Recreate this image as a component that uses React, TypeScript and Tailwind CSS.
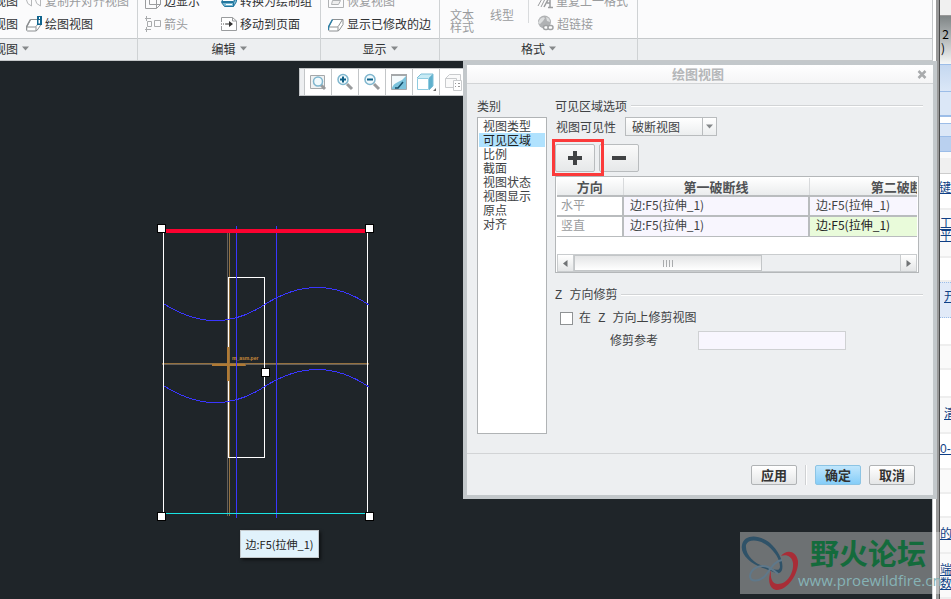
import React, { useState } from 'react';

const CATEGORIES = ['视图类型', '可见区域', '比例', '截面', '视图状态', '视图显示', '原点', '对齐'];

const BREAK_LINES = [
  { direction: '水平', first: '边:F5(拉伸_1)', second: '边:F5(拉伸_1)', active: false },
  { direction: '竖直', first: '边:F5(拉伸_1)', second: '边:F5(拉伸_1)', active: true },
];

const Caret: React.FC = () => (
  <svg width="7" height="5" viewBox="0 0 7 5" aria-hidden="true">
    <path d="M0 0.5h7L3.5 4.5z" fill="#85888a" />
  </svg>
);

const CubeIcon: React.FC = () => (
  <svg width="16" height="16" viewBox="0 0 16 16" fill="none" stroke="#9a9c9e" aria-hidden="true">
    <path d="M0.5 4.5h11v11H0.5zM4.5 0.5h11v11h-11zM0.5 4.5l4-4M11.5 15.5l4-4" />
  </svg>
);

const RestoreIcon: React.FC = () => (
  <svg width="16" height="16" viewBox="0 0 16 16" fill="none" stroke="#b0b2b4" aria-hidden="true">
    <path d="M0.500 2.500h15v12H0.500z" />
    <path d="M4.500 7.500h8l-2 4h-7z" fill="#eee" />
  </svg>
);

const SheetIcon: React.FC<{ edge: string; badge?: boolean }> = ({ edge, badge }) => (
  <svg width="16" height="16" viewBox="0 0 16 16" fill="none" aria-hidden="true">
    <path d="M4.500 3.500h10.500v5l-3 4.500q-1 2-2.500 2H1.500q-1 0-1-1.500V11z" fill="#fff" stroke="#8d9092" />
    <path d="M0.500 11h8.500q1 0 1.500-1l4-6.500M10 11v4" stroke="#8d9092" />
    <path d="M0.500 14V11l4-7.500" stroke={edge} strokeWidth="1.500" />
    {badge && (
      <>
        <path d="M11 0h5v9h-5z" fill="#0f648e" />
        <path d="M13 1h1v2h-1zM12.500 4h1.500v3.500h-1.500z" fill="#fff" />
      </>
    )}
  </svg>
);

const ConvertIcon: React.FC = () => (
  <svg width="16" height="16" viewBox="0 0 16 16" fill="none" stroke="#23769e" aria-hidden="true">
    <path d="M4.500 3.500h11l-3 5H0.500z" fill="#fff" />
    <path d="M0.500 9.500h12v4h-9zM12.500 9.500l3-5v4l-3 5" fill="#7ab9d3" />
    <path d="M5 11.500h6" stroke="#fff" />
  </svg>
);

const CopyAlignIcon: React.FC = () => (
  <svg width="16" height="16" viewBox="0 0 16 16" fill="none" stroke="#b5b7b9" aria-hidden="true">
    <path d="M0.500 7q0 4 5 6V7q-2 0-2-4M9.500 7q0 4 5 6V7q-2 0-2-4" />
  </svg>
);

const ArrowsIcon: React.FC = () => (
  <svg width="16" height="16" viewBox="0 0 16 16" fill="none" stroke="#a9abad" aria-hidden="true">
    <path d="M0 2.500h6M1.500 0v5M0 13.500h6M1.500 11v5M2.500 5.500h4v5h-4zM9.500 4.500h6v6h-6z" />
  </svg>
);

const MovePageIcon: React.FC = () => (
  <svg width="16" height="16" viewBox="0 0 16 16" fill="none" aria-hidden="true">
    <path d="M0.500 6V1.500h11l4 3.500v9.500H0.500V10" fill="#fff" stroke="#9a9c9e" />
    <path d="M11.500 1.500V5h4" stroke="#9a9c9e" />
    <path d="M0 8h5" stroke="#555" strokeWidth="1" strokeDasharray="1 1" />
    <path d="M5 7.500h3V5l4 3-4 3V8.500H5z" fill="#333" />
  </svg>
);

const FormatIcon: React.FC = () => (
  <svg width="16" height="16" viewBox="0 0 16 16" fill="none" stroke="#9a9c9e" aria-hidden="true">
    <path d="M1 13l5-9M4 14l6-12" />
    <path d="M7 14l6-11v11M10 10h3M11 14.500h5" strokeWidth="1.500" />
  </svg>
);

const LinkIcon: React.FC = () => (
  <svg width="17" height="17" viewBox="0 0 17 17" fill="none" aria-hidden="true">
    <circle cx="7.500" cy="7" r="6.500" fill="#b0b2b4" />
    <path d="M3 4q3-3 5-1l-2 3-3 3-2-1zM9 2q4 1 4 5l-3-1z" fill="#dcdedf" />
    <rect x="6.500" y="10.500" width="5" height="4" rx="2" fill="#fff" stroke="#a0a2a4" strokeWidth="1.500" />
    <rect x="11" y="10.500" width="5" height="4" rx="2" fill="#fff" stroke="#a0a2a4" strokeWidth="1.500" />
  </svg>
);

interface RibbonButtonProps {
  icon?: React.ReactNode;
  label: string;
  disabled?: boolean;
}

const RibbonButton: React.FC<RibbonButtonProps> = ({ icon, label, disabled }) => (
  <button
    disabled={disabled}
    className="flex h-[23px] items-center gap-[3px] whitespace-nowrap text-[#303234] disabled:text-[#9a9c9e]"
  >
    {icon}
    {label}
  </button>
);

interface RibbonGroupProps {
  title: string;
  className: string;
  children?: React.ReactNode;
}

const RibbonGroup: React.FC<RibbonGroupProps> = ({ title, className, children }) => (
  <section className={`flex flex-col border-r border-[#cfd2d4] ${className}`}>
    <div className="flex h-[38px] items-end overflow-hidden pb-[3px]">{children}</div>
    <button className="flex h-[22px] items-center justify-center gap-1 border-t border-[#c5c8ca] bg-[#edeff1] pb-0.5 text-[#303234]">
      {title}
      <Caret />
    </button>
  </section>
);

const Ribbon: React.FC = () => (
  <header className="flex h-[61px] shrink-0 overflow-hidden border-b border-[#c5c8ca] bg-[#fbfbfc]">
    <section className="flex w-[138px] shrink-0 flex-col border-r border-[#cfd2d4]">
      <div className="flex h-[38px] items-end gap-2 overflow-hidden pb-[3px]">
        <div className="flex w-[18px] shrink-0 flex-col items-end">
          <RibbonButton label="视图" />
          <RibbonButton label="视图" />
        </div>
        <div className="flex shrink-0 flex-col">
          <RibbonButton icon={<CopyAlignIcon />} label="复制并对齐视图" disabled />
          <RibbonButton icon={<SheetIcon edge="#8d9092" badge />} label="绘图视图" />
        </div>
      </div>
      <div className="flex h-[22px] items-center border-t border-[#c5c8ca] bg-[#edeff1] pb-0.5">
        <button className="flex w-[29px] items-center justify-end gap-1 whitespace-nowrap text-[#303234]">
          视图
          <span className="shrink-0">
            <Caret />
          </span>
        </button>
      </div>
    </section>

    <RibbonGroup title="编辑" className="w-[183px] shrink-0">
      <div className="flex w-[83px] flex-col pl-[7px]">
        <RibbonButton icon={<CubeIcon />} label="边显示" />
        <RibbonButton icon={<ArrowsIcon />} label="箭头" disabled />
      </div>
      <div className="flex flex-col">
        <RibbonButton icon={<ConvertIcon />} label="转换为绘制组" />
        <RibbonButton icon={<MovePageIcon />} label="移动到页面" />
      </div>
    </RibbonGroup>

    <RibbonGroup title="显示" className="w-[119px] shrink-0">
      <div className="flex flex-col pl-[7px]">
        <RibbonButton icon={<RestoreIcon />} label="恢复视图" disabled />
        <RibbonButton icon={<SheetIcon edge="#2d7fa6" />} label="显示已修改的边" />
      </div>
    </RibbonGroup>

    <RibbonGroup title="格式" className="w-[198px] shrink-0">
      <button disabled className="mb-0.5 ml-2.5 w-6 shrink-0 text-xs leading-3 text-[#9a9c9e]">
        文本样式
      </button>
      <button disabled className="mb-3 ml-4 w-6 shrink-0 whitespace-nowrap text-[#9a9c9e]">
        线型
      </button>
      <div className="mb-3 ml-3.5 mr-2 h-6 w-px bg-[#d9dbdd]" />
      <div className="flex flex-col">
        <RibbonButton icon={<FormatIcon />} label="重复上一格式" disabled />
        <RibbonButton icon={<LinkIcon />} label="超链接" disabled />
      </div>
    </RibbonGroup>

    <div className="flex flex-1 flex-col">
      <div className="h-[38px]" />
      <div className="h-[22px] border-t border-[#c5c8ca] bg-[#edeff1]" />
    </div>
  </header>
);

const Magnifier: React.FC<{ sign?: 'plus' | 'minus' }> = ({ sign }) => (
  <svg width="18" height="18" viewBox="0 0 18 18" fill="none" aria-hidden="true">
    {!sign && <path d="M1.500 2.500h14v13h-14z" fill="#f0f2f3" stroke="#a5a8aa" />}
    <path d="M11 11l5 5" stroke="#999b9d" strokeWidth="3" />
    <circle cx={sign ? 7 : 9} cy={sign ? 6.5 : 8.5} r={sign ? 5 : 4.5} fill="#f1fafd" stroke="#7fb6ce" strokeWidth="1.500" />
    {sign && <path d="M4 6.500h6" stroke="#0d5f86" strokeWidth="2" />}
    {sign === 'plus' && <path d="M7 3.500v6" stroke="#0d5f86" strokeWidth="2" />}
  </svg>
);

const RepaintIcon: React.FC = () => (
  <svg width="18" height="18" viewBox="0 0 18 18" fill="none" aria-hidden="true">
    <path d="M1.500 1.500h15v15h-15z" fill="#7cc3dc" stroke="#a5a8aa" />
    <path d="M2 3h14Q13 7 8 9 3 11 2 15z" fill="#f4fafc" />
    <path d="M1 2h16" stroke="#a5a8aa" strokeWidth="2" />
    <path d="M5 15h3l5-6" stroke="#17506b" strokeWidth="1.500" />
  </svg>
);

const ShadedIcon: React.FC = () => (
  <svg width="20" height="18" viewBox="0 0 20 18" fill="none" aria-hidden="true">
    <path d="M1 5l4-4h12l-4 4z" fill="#c8ebf5" />
    <path d="M13 5l4-4v12l-4 4z" fill="#5fb0cd" />
    <path d="M1.500 5.500h11v11h-11z" fill="#fff" stroke="#8fcbe0" />
    <path d="M1 5l4-4h12l-4 4M17 1v12l-4 4" stroke="#7dbfd7" />
    <path d="M20 15v3h-3z" fill="#666" />
  </svg>
);

const SavedViewIcon: React.FC = () => (
  <svg width="18" height="18" viewBox="0 0 18 18" fill="none" stroke="#c9cbcd" aria-hidden="true">
    <path d="M1.500 5.500h11v9h-11zM1.500 5.500l4-4h11v6" fill="#fafafa" />
    <path d="M9.500 7.500h8v10h-8z" fill="#fff" />
    <path d="M11 10.500h1M14 10.500h2M11 13.500h1M14 13.500h2" stroke="#999" />
  </svg>
);

const VIEW_TOOLS = [
  { label: '重新调整', icon: <Magnifier /> },
  { label: '放大', icon: <Magnifier sign="plus" /> },
  { label: '缩小', icon: <Magnifier sign="minus" /> },
  { label: '重画', icon: <RepaintIcon /> },
  { label: '显示样式', icon: <ShadedIcon /> },
  { label: '已命名视图', icon: <SavedViewIcon /> },
];

// Broken view drawing, in the coordinates of the sheet
const Drawing: React.FC = () => (
  <svg className="absolute left-[150px] top-[159px]" width="230" height="310" viewBox="150 220 230 310" fill="none" shapeRendering="crispEdges">
    <path d="M227.500 233V516M162 364.500H369" stroke="#66605a" />
    <path d="M229.500 233V516M162 363.500H369" stroke="#94713f" />
    <path d="M212 364.500h34M228 347v34" stroke="#b07a35" strokeWidth="2" />
    <path d="M163.500 233V513M367.500 233V513" stroke="#fff" />
    <path d="M228.500 347V277.500H264.500V457.500H228.500V381" stroke="#fff" />
    <path d="M236.500 226V518M276.500 226V518" stroke="#3a36ff" />
    <path d="M164 304C198 325 230 327 264 305S334 281 369 305" stroke="#3a36ff" />
    <path d="M164 386C198 407 230 409 264 387S334 363 369 387" stroke="#3a36ff" />
    <path d="M164 513.500H367" stroke="#19e3e3" />
    <path d="M164 231H368" stroke="#fb0230" strokeWidth="4" />
    <path d="M245 363v3" stroke="#8a6b42" />
    <text x="232" y="360" fill="#c88a3a" fontSize="5" fontWeight="bold" fontFamily="Liberation Sans, sans-serif">
      m_asm.per
    </text>
    <g fill="#fff" stroke="#000">
      <rect x="157.500" y="224.500" width="8" height="8" />
      <rect x="365.500" y="224.500" width="8" height="8" />
      <rect x="261.500" y="368.500" width="8" height="8" />
      <rect x="157.500" y="512.500" width="8" height="8" />
      <rect x="365.500" y="512.500" width="8" height="8" />
    </g>
  </svg>
);

const Canvas: React.FC = () => (
  <main className="relative flex-1 overflow-hidden bg-[#1f2529]">
    <div className="ml-[299px] mt-[7px] flex h-7 w-[170px] border border-[#c3c6c8] bg-[#edeff1] pl-1">
      {VIEW_TOOLS.map((tool) => (
        <button
          key={tool.label}
          aria-label={tool.label}
          className="flex w-[27px] shrink-0 items-center justify-center border-l border-[#c3c6c8] bg-white"
        >
          {tool.icon}
        </button>
      ))}
    </div>
    <Drawing />
    <div
      role="tooltip"
      className="absolute left-[240px] top-[469px] flex h-7 w-[79px] items-center justify-center whitespace-nowrap border border-[#c3c8cb] bg-[#e1f2fb] text-[11px] text-[#222] shadow-[2px_2px_3px_#0008]"
    >
      边:F5(拉伸_1)
    </div>
  </main>
);

const FieldsetTitle: React.FC<{ children: React.ReactNode }> = ({ children }) => (
  <legend className="flex h-4 w-full items-center gap-1 whitespace-nowrap">
    {children}
    <span className="h-0.5 flex-1 border-t border-[#d2d4d6] bg-white" />
  </legend>
);

const TOOL_BUTTON =
  'flex h-7 w-10 items-center justify-center rounded-xs border border-[#b9bcbe] bg-linear-to-b from-[#fafafa] to-[#e6e8e9]';
const FOOTER_BUTTON = 'h-5 w-[46px] rounded-xs border text-[13px] leading-4 font-bold text-[#333]';
const PLAIN = 'border-[#b0b3b5] bg-linear-to-b from-white to-[#e4e6e7]';

const BreakTable: React.FC = () => (
  <div className="h-[97px] overflow-hidden border border-[#b4b7b9] bg-white p-px">
    <div className="h-[76px] overflow-hidden">
      <table className="w-[440px] table-fixed border-collapse">
        <thead>
          <tr className="h-[18px] bg-linear-to-b from-white to-[#e9ebec] text-[13px] text-[#505254]">
            <th className="w-[66px] border-r border-[#d8dadc] p-0 leading-4">方向</th>
            <th className="w-[186px] border-r border-[#d8dadc] p-0 leading-4">第一破断线</th>
            <th className="p-0 leading-4">第二破断线</th>
          </tr>
        </thead>
        <tbody>
          {BREAK_LINES.map((row) => (
            <tr key={row.direction} className="h-5 border-t-2 border-b border-[#b9bcbe]">
              <td className="border-r-2 border-[#b9bcbe] pb-0.5 pl-1 pt-0 leading-4 text-[#9a9c9e]">{row.direction}</td>
              <td className="border-r-2 border-[#b9bcbe] bg-[#f8f6fe] pb-0.5 pl-1.5 pt-0 leading-4">{row.first}</td>
              <td className={`pb-0.5 pl-1.5 pt-0 leading-4 ${row.active ? 'bg-[#e9fbda] text-[#222]' : 'bg-[#f8f6fe]'}`}>
                {row.second}
              </td>
            </tr>
          ))}
        </tbody>
      </table>
    </div>
    <div className="flex h-[18px] border border-[#c9ccce] bg-[#edeff1]">
      <button aria-label="向左滚动" className="flex w-4 items-center justify-center border-r border-[#c9ccce] bg-linear-to-b from-white to-[#e4e6e7]">
        <svg width="5" height="7" viewBox="0 0 5 7"><path d="M4.500 0v7L0 3.500z" fill="#707375" /></svg>
      </button>
      <div className="flex-1">
        <div className="flex h-full w-[188px] items-center justify-center gap-0.5 border border-[#c3c6c8] bg-linear-to-b from-[#e4e5e6] to-white">
          <span className="h-[7px] w-px bg-[#a9abad]" />
          <span className="h-[7px] w-px bg-[#a9abad]" />
          <span className="h-[7px] w-px bg-[#a9abad]" />
          <span className="h-[7px] w-px bg-[#a9abad]" />
        </div>
      </div>
      <button aria-label="向右滚动" className="flex w-4 items-center justify-center border-l border-[#c9ccce] bg-linear-to-b from-white to-[#e4e6e7]">
        <svg width="5" height="7" viewBox="0 0 5 7"><path d="M0.500 0v7L5 3.500z" fill="#707375" /></svg>
      </button>
    </div>
  </div>
);

const DrawingViewDialog: React.FC = () => {
  const [category, setCategory] = useState('可见区域');
  const [clipZ, setClipZ] = useState(false);

  return (
    <div
      role="dialog"
      aria-label="绘图视图"
      className="absolute right-[14px] top-[61px] flex h-[438px] w-[474px] flex-col border-4 border-[#c3c8cb] bg-[#edeff1] text-[#404244]"
    >
      <div className="flex h-[19px] shrink-0 items-center border-b border-[#d2d4d6] bg-linear-to-b from-white to-[#f5f5f6] pl-3 pr-1.5 text-[13px] font-bold text-[#b5b7b9]">
        <h1 className="flex-1 text-center leading-4">绘图视图</h1>
        <button aria-label="关闭">
          <svg width="10" height="9" viewBox="0 0 10 9"><path d="M1.500 1l7 7M8.500 1l-7 7" stroke="#a9abad" strokeWidth="2.500" /></svg>
        </button>
      </div>

      <div className="flex min-h-0 flex-1 gap-2 px-2.5 pt-3.5">
        <div className="flex w-[70px] shrink-0 flex-col gap-[3px]">
          <h2 className="h-4 leading-4">类别</h2>
          <ul className="h-[317px] border border-[#b0b3b5] bg-white p-px">
            {CATEGORIES.map((name) => (
              <li key={name}>
                <button
                  onClick={() => setCategory(name)}
                  className={`block h-3.5 w-full pl-1 text-left leading-3.5 ${name === category ? 'bg-[#b0e2fe] text-[#222]' : ''}`}
                >
                  {name}
                </button>
              </li>
            ))}
          </ul>
        </div>

        <div className="min-w-0 flex-1">
          <fieldset className="min-w-0">
            <FieldsetTitle>可见区域选项</FieldsetTitle>
            <div className="mt-[3px] flex h-[19px] items-center gap-[9px] pl-px">
              <label htmlFor="visibility">视图可见性</label>
              <div className="relative h-[19px] w-[92px]">
                <select id="visibility" className="h-full w-full appearance-none border border-[#b9bcbe] bg-linear-to-b from-white to-[#eceeef] pl-1.5 leading-4">
                  <option>破断视图</option>
                  <option>全视图</option>
                  <option>半视图</option>
                </select>
                <span className="pointer-events-none absolute right-px top-px flex h-[17px] w-3.5 items-center justify-center border-l border-[#b9bcbe]">
                  <Caret />
                </span>
              </div>
            </div>
            <div className="mt-2 flex h-7 gap-1">
              <div className="relative">
                <button aria-label="添加" className={TOOL_BUTTON}>
                  <svg width="14" height="14" viewBox="0 0 14 14"><path d="M5 0h4v5h5v4H9v5H5V9H0V5h5z" fill="#404244" /></svg>
                </button>
                <span className="pointer-events-none absolute -left-[3px] -top-[5px] h-[37px] w-[52px] border-3 border-[#fb3a3a]" />
              </div>
              <button aria-label="移除" className={TOOL_BUTTON}>
                <svg width="14" height="4" viewBox="0 0 14 4"><path d="M0 0h14v4H0z" fill="#404244" /></svg>
              </button>
            </div>
            <div className="mr-1 mt-1">
              <BreakTable />
            </div>
          </fieldset>

          <fieldset className="mt-3.5 min-w-0">
            <FieldsetTitle>
              <span className="pt-0.5 font-['Liberation_Mono','Noto_Sans_CJK_SC',monospace]">Z 方向修剪</span>
            </FieldsetTitle>
            <label className="mt-[7px] flex h-4 items-center gap-1.5 pl-[5px] font-['Liberation_Mono','Noto_Sans_CJK_SC',monospace]">
              <input
                type="checkbox"
                checked={clipZ}
                onChange={(e) => setClipZ(e.target.checked)}
                className="h-[13px] w-[13px] appearance-none border border-[#8f9294] bg-white checked:bg-[#404244]"
              />
              <span className="pt-0.5">在 Z 方向上修剪视图</span>
            </label>
            <div className="mt-1 flex h-5 items-center gap-10 pl-[55px]">
              <label htmlFor="clip-ref">修剪参考</label>
              <input id="clip-ref" className="h-[19px] w-[148px] border border-[#cfd1d3] bg-[#f8f6fe] px-1" />
            </div>
          </fieldset>
        </div>
      </div>

      <footer className="flex h-[42px] shrink-0 items-center justify-end gap-2 border-t border-[#d2d4d6] pr-[18px]">
        <button className={`${FOOTER_BUTTON} ${PLAIN}`}>应用</button>
        <span className="h-5 w-0.5 border-l border-[#cfd1d3] bg-white" />
        <button className={`${FOOTER_BUTTON} border-[#8cc4e4] bg-linear-to-b from-[#c0e6fc] to-[#84cdf8]`}>确定</button>
        <button className={`${FOOTER_BUTTON} ${PLAIN}`}>取消</button>
      </footer>
    </div>
  );
};

// Sliver of the forum page that shows behind the application window
const ForumEdge: React.FC = () => (
  <aside className="flex w-[11px] shrink-0 flex-col overflow-hidden whitespace-nowrap bg-[#fafafa] text-[#0f3f85]">
    <div className="h-4 border-b border-[#999] bg-[#f0f0f0]" />
    <div className="flex h-12 flex-col items-end bg-linear-to-b from-[#7f8586] to-[#f5f7f7] pr-0.5 pt-2.5 text-black">
      <span className="leading-4">2</span>
      <span className="mr-1 leading-3">)</span>
    </div>
    <div className="h-7 border-y border-[#9cbde8] bg-linear-to-b from-[#c5d8f0] to-[#dbe7f7]" />
    <div className="h-6 border-b border-[#9cbde8] bg-[#dbe7f7]" />
    <div className="h-2 border-y border-[#9cbde8] bg-white" />
    <div className="h-3 bg-[#dbe7f7]" />
    <div className="h-4 border-y border-[#9cbde8] bg-[#b9d0ef]" />
    <div className="mt-1.5 h-4 border-b border-[#ccc] bg-[#f0f0f0]" />
    <a href="#" className="flex h-9 items-center justify-end border-b-2 border-[#eee] bg-white pb-2 underline">关键</a>
    <a href="#" className="flex h-12 flex-col items-start justify-center border-b-2 border-[#eee] pb-2 leading-3 underline">
      <span>工</span>
      <span>平安</span>
    </a>
    <div className="h-6 border-b-2 border-[#eee] bg-white" />
    <a href="#" className="flex h-9 items-center border-y border-dotted border-[#9cbde8] bg-[#e1eaf8] pb-2 pl-1 underline">开</a>
    <div className="h-7 border-b-2 border-[#eee] bg-white" />
    <div className="h-6 border-b-2 border-[#eee]" />
    <div className="h-7 border-b-2 border-[#eee] bg-white" />
    <a href="#" className="flex h-9 items-center border-b-2 border-[#eee] pb-1 pl-1 underline">清</a>
    <a href="#" className="flex h-9 items-center border-b-2 border-[#eee] bg-white pb-1 font-['Liberation_Sans',sans-serif] underline">0-2</a>
    <div className="h-6 border-b-2 border-[#eee]" />
    <div className="h-6 border-b-2 border-[#eee] bg-white" />
    <a href="#" className="flex h-9 items-center border-b-2 border-[#eee] pb-1 underline">的</a>
    <a href="#" className="flex flex-1 flex-col justify-center border-b-2 border-[#eee] leading-3.5 underline">
      <span>端午</span>
      <span>数好</span>
    </a>
  </aside>
);

const Watermark: React.FC = () => (
  <div className="pointer-events-none absolute bottom-[5px] right-0 flex h-[62px] w-[211px]">
    <div className="absolute inset-y-0 left-0 right-[11px] bg-white/35" />
    <svg className="relative shrink-0" width="62" height="62" viewBox="0 0 62 62" fill="none">
      <path d="M2 13C4 2 19 2 30 11c9 8 14 19 12 27-3 7-9 1-19-2C10 32 0 22 2 13zM6 13c-1 9 8 19 18 21 9 2 15 7 16 1 0-8-5-15-12-21C19 7 8 7 6 13z" fill="#2f5268" fillRule="evenodd" />
      <path d="M41 24c4-6 15-7 17 5 1 13-11 30-22 29-8-2-8-12-5-20-1 8 1 14 7 14 9 0 16-11 15-21-1-7-7-9-12-7z" fill="#a82d37" />
      <path d="M42 28c-8 1-12 10-17 16-6 6-15 6-15 0 1-8 10-12 18-9 4 2 7 4 10 7" stroke="#5f788a" strokeWidth="2" />
    </svg>
    <div className="relative -ml-1 flex flex-col whitespace-nowrap">
      <span className="pl-3 text-[29px] leading-10 font-bold text-[#146b3c]">野火论坛</span>
      <span className="font-['Open_Sans',sans-serif] text-[15px] leading-4 text-[#86b3b6]">www.proewildfire.cn</span>
    </div>
  </div>
);

const App: React.FC = () => (
  <div className="relative flex h-screen w-full overflow-hidden bg-white font-['Noto_Sans_CJK_SC',sans-serif] text-xs">
    <div className="flex min-w-0 flex-1 flex-col">
      <Ribbon />
      <Canvas />
    </div>
    <div className="w-1 shrink-0 border-l border-[#c5c8ca] bg-white" />
    <div className="w-1 shrink-0 border-r border-[#4a4a4a] bg-[#999]" />
    <ForumEdge />
    <DrawingViewDialog />
    <Watermark />
  </div>
);

export default App;
